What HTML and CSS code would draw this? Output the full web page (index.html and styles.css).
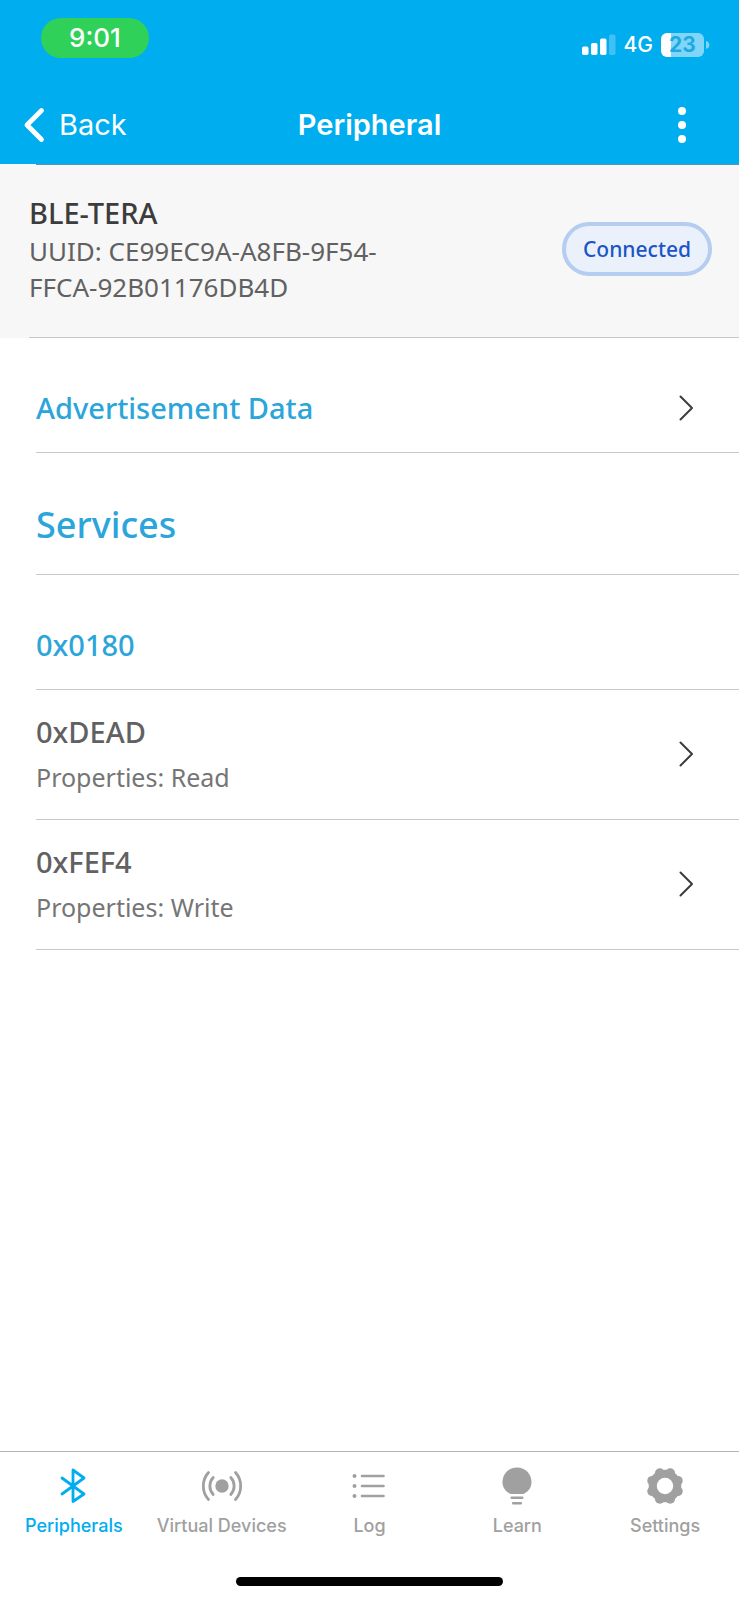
FILE: index.html
```html
<!DOCTYPE html>
<html lang="en">
<head>
<meta charset="utf-8">
<meta name="viewport" content="width=device-width, initial-scale=1">
<title>Peripheral</title>
<link rel="stylesheet" href="styles.css">
</head>
<body>
<header class="top">
  <div class="status">
    <span class="clock">9:01</span>
    <div class="status-icons">
      <svg class="signal" width="34" height="22" viewBox="0 0 34 22" fill="#fff" aria-hidden="true">
        <rect x="0" y="12.500" width="6.500" height="8.500" rx="1.800"/>
        <rect x="9" y="9" width="6.500" height="12" rx="1.800"/>
        <rect x="18" y="4.500" width="6.500" height="16.500" rx="1.800"/>
        <rect x="27" y="0.500" width="6.500" height="20.500" rx="1.800" opacity=".25"/>
      </svg>
      <span class="network">4G</span>
      <span class="battery"><span class="battery-level">23</span><svg width="4" height="8" viewBox="0 0 4 8" aria-hidden="true"><path d="M0 0c2.200.6 3.400 2.200 3.400 4S2.200 7.400 0 8z" fill="#7fd6f8"/></svg></span>
    </div>
  </div>
  <div class="navbar">
    <button class="back" type="button">
      <svg width="22" height="36" viewBox="0 0 22 36" fill="none" stroke="#fff" stroke-width="4.800" stroke-linecap="round" stroke-linejoin="round" aria-hidden="true"><path d="M18.500 3.500 4 18l14.500 14.500"/></svg>
      <span>Back</span>
    </button>
    <h1 class="title">Peripheral</h1>
    <button class="more" type="button" aria-label="More options">
      <svg width="10" height="38" viewBox="0 0 10 38" fill="#fff" aria-hidden="true"><circle cx="5" cy="5" r="4"/><circle cx="5" cy="19" r="4"/><circle cx="5" cy="33" r="4"/></svg>
    </button>
  </div>
</header>

<main class="content">
  <section class="device">
    <div class="device-info">
      <h2 class="device-name">BLE-TERA</h2>
      <p class="device-id">UUID: CE99EC9A-A8FB-9F54-FFCA-92B01176DB4D</p>
    </div>
    <button class="badge" type="button">Connected</button>
  </section>

  <div class="list">
    <a class="row row-head" href="#advertisement">
      <span>Advertisement Data</span>
      <svg class="chevron" width="16" height="28" viewBox="0 0 16 28" aria-hidden="true"><path d="M2.500 2.500 14 14 2.500 25.500"/></svg>
    </a>
    <h2 class="row row-title">Services</h2>
    <h3 class="row row-head">0x0180</h3>
    <a class="row row-item" href="#dead">
      <span class="item"><span class="item-name">0xDEAD</span><span class="item-props">Properties: Read</span></span>
      <svg class="chevron" width="16" height="28" viewBox="0 0 16 28" aria-hidden="true"><path d="M2.500 2.500 14 14 2.500 25.500"/></svg>
    </a>
    <a class="row row-item" href="#fef4">
      <span class="item"><span class="item-name">0xFEF4</span><span class="item-props">Properties: Write</span></span>
      <svg class="chevron" width="16" height="28" viewBox="0 0 16 28" aria-hidden="true"><path d="M2.500 2.500 14 14 2.500 25.500"/></svg>
    </a>
  </div>
</main>

<footer class="bottom">
  <nav class="tabs">
    <a class="tab tab-active" href="#peripherals" aria-current="page">
      <svg width="44" height="44" viewBox="0 0 44 44" fill="none" stroke="currentColor" stroke-width="2.800" stroke-linejoin="round" stroke-linecap="round" aria-hidden="true"><path d="M10 14 32 30 21 37.500V6l11 8-22 16"/></svg>
      <span>Peripherals</span>
    </a>
    <a class="tab" href="#virtual">
      <svg width="44" height="44" viewBox="0 0 44 44" fill="none" stroke="currentColor" stroke-width="2.800" stroke-linecap="round" aria-hidden="true"><circle cx="22" cy="22" r="6.700" fill="currentColor" stroke="none"/><path d="M13.200 13.500a12.500 12.500 0 0 0 0 17M30.800 13.500a12.500 12.500 0 0 1 0 17M8.500 8.500C1.600 16 1.600 28 8.500 35.500M35.500 8.500c6.900 7.500 6.900 19.500 0 27"/></svg>
      <span>Virtual Devices</span>
    </a>
    <a class="tab" href="#log">
      <svg width="44" height="44" viewBox="0 0 44 44" fill="none" stroke="currentColor" stroke-width="2.600" stroke-linecap="round" aria-hidden="true"><path d="M15 12h21.500M15 22h21.500M15 32h21.500"/><g fill="currentColor" stroke="none"><circle cx="7.500" cy="12" r="2"/><circle cx="7.500" cy="22" r="2"/><circle cx="7.500" cy="32" r="2"/></g></svg>
      <span>Log</span>
    </a>
    <a class="tab" href="#learn">
      <svg width="44" height="44" viewBox="0 0 44 44" fill="currentColor" aria-hidden="true"><path d="M15.600 30h12.800c4.800-2.300 8.100-6.300 8.100-11.800C36.500 10 30.500 3.500 22 3.500S7.500 10 7.500 18.200c0 5.500 3.300 9.500 8.100 11.800z"/><rect x="15.500" y="32.500" width="13" height="2.600" rx="1"/><rect x="17" y="38" width="10" height="2.600" rx="1"/></svg>
      <span>Learn</span>
    </a>
    <a class="tab" href="#settings">
      <svg width="44" height="44" viewBox="0 0 44 44" fill="currentColor" aria-hidden="true"><circle cx="22" cy="22" r="16.300"/><circle cx="27.200" cy="9.200" r="4.900"/><circle cx="34.800" cy="16.800" r="4.900"/><circle cx="34.800" cy="27.200" r="4.900"/><circle cx="27.200" cy="34.800" r="4.900"/><circle cx="16.800" cy="34.800" r="4.900"/><circle cx="9.200" cy="27.200" r="4.900"/><circle cx="9.200" cy="16.800" r="4.900"/><circle cx="16.800" cy="9.200" r="4.900"/><circle cx="22" cy="22" r="8.200" fill="#fff"/></svg>
      <span>Settings</span>
    </a>
  </nav>
  <div class="home-indicator"></div>
</footer>
</body>
</html>
```
FILE: styles.css
```css
* { box-sizing: border-box; }

body {
  margin: 0;
  min-height: 100vh;
  display: flex;
  flex-direction: column;
  background: #fff;
  font-family: "Noto Sans", "Open Sans", sans-serif;
  color: #616161;
}

h1, h2, h3, p { margin: 0; font-weight: 400; }
a { color: inherit; text-decoration: none; }
button { border: 0; padding: 0; background: none; font: inherit; color: inherit; }
svg { display: block; flex: none; }

.top {
  background: #00adef;
  color: #fff;
  font-family: Inter, sans-serif;
}

.status {
  display: flex;
  justify-content: space-between;
  align-items: flex-start;
  padding: 18px 29px 0 41px;
}

.clock {
  padding: 0 28px;
  border-radius: 20px;
  background: #30d158;
  font-size: 26px;
  font-weight: 500;
  line-height: 40px;
}

.status-icons {
  display: flex;
  align-items: center;
  gap: 8px;
  height: 54px;
}

.network { font-size: 21px; font-weight: 500; line-height: 24px; }

.battery { display: flex; align-items: center; gap: 2px; }

.battery-level {
  width: 43px;
  border-radius: 6px;
  background: linear-gradient(to right, #fff 10px, #7fd6f8 10px);
  color: #1fa9e2;
  font-size: 21px;
  font-weight: 700;
  line-height: 24px;
  text-align: center;
}

.navbar {
  display: grid;
  grid-template-columns: 1fr auto 1fr;
  align-items: center;
  padding: 34px 0 20px;
}

.back {
  display: flex;
  align-items: center;
  gap: 14px;
  padding-left: 23px;
  font-size: 29px;
  line-height: 36px;
}

.title { font-size: 29px; font-weight: 600; line-height: 36px; }
.more { justify-self: end; margin-right: 52px; }

.device {
  display: flex;
  justify-content: space-between;
  align-items: center;
  padding: 29px 27px 33px 29px;
  background: linear-gradient(to right, #f7f7f7 29px, #c8c8c8 29px) bottom / 100% 1px no-repeat,
    linear-gradient(to right, #f7f7f7 36px, #5795b3 36px) top / 100% 1px no-repeat,
    #f7f7f7;
}

.device-info { flex: 0 1 56%; }
.device-name { color: #3c3c3c; font-size: 29px; font-weight: 500; line-height: 40px; }
.device-id { font-size: 26px; line-height: 36px; }

.badge {
  padding: 0 17px;
  border: 4px solid #b5cdf0;
  border-radius: 27px;
  background: #eaf1fb;
  color: #1b55c8;
  font-size: 21px;
  font-weight: 500;
  line-height: 46px;
}

.list { padding-left: 36px; }

.row {
  display: flex;
  justify-content: space-between;
  align-items: center;
  padding-right: 45px;
  border-bottom: 1px solid #c8c8c8;
}

.row-head {
  padding-top: 50px;
  padding-bottom: 24px;
  color: #2ba5da;
  font-size: 29px;
  font-weight: 500;
  line-height: 40px;
}

.row-title {
  padding-top: 48px;
  padding-bottom: 25px;
  color: #2ba5da;
  font-size: 36px;
  font-weight: 500;
  line-height: 48px;
}

.row-item { padding-top: 22px; padding-bottom: 24px; }
.item { display: flex; flex-direction: column; gap: 7px; }
.item-name { font-size: 29px; font-weight: 500; line-height: 40px; }
.item-props { color: #757575; font-size: 25px; line-height: 36px; }

.chevron {
  fill: none;
  stroke: #3c3c3c;
  stroke-width: 2;
  stroke-linecap: round;
  stroke-linejoin: round;
}

.bottom {
  margin-top: auto;
  padding: 12px 0 14px;
  border-top: 1px solid #b4b4b4;
}

.tabs { display: grid; grid-template-columns: repeat(5, 1fr); }

.tab {
  display: flex;
  flex-direction: column;
  align-items: center;
  gap: 6px;
  color: #a0a0a0;
  font-family: Inter, sans-serif;
  font-size: 18px;
  font-weight: 500;
  line-height: 24px;
  white-space: nowrap;
}

.tab-active { color: #00adef; }

.home-indicator {
  width: 36%;
  height: 9px;
  margin: 39px auto 0;
  border-radius: 5px;
  background: #000;
}
```
